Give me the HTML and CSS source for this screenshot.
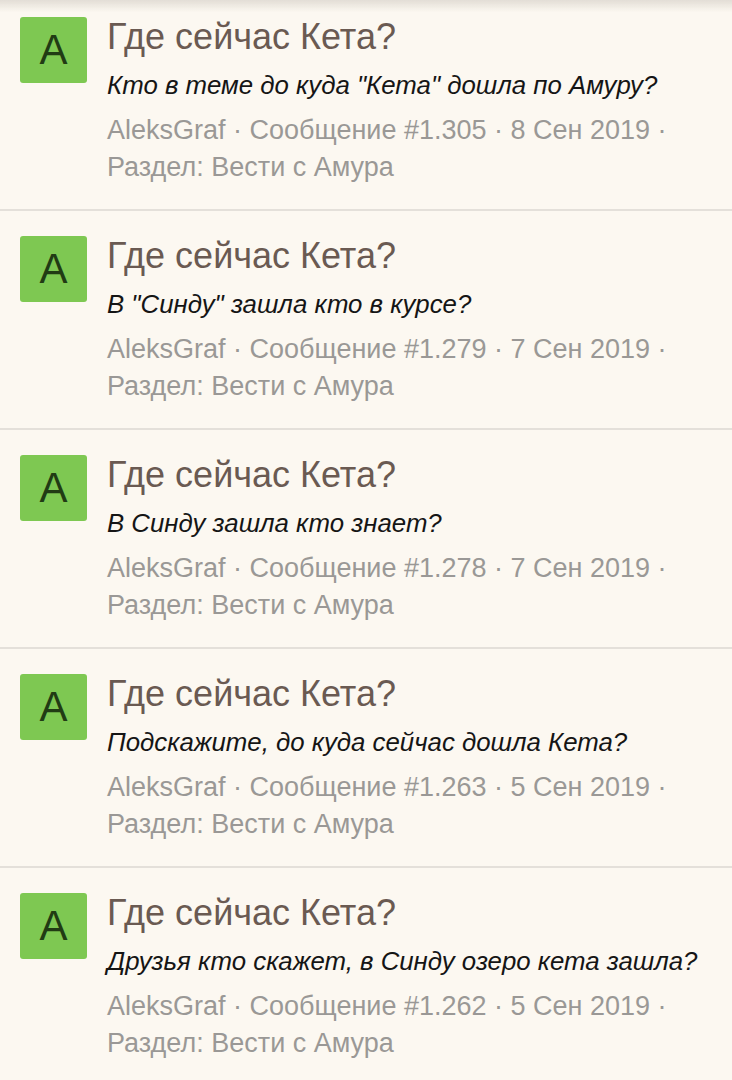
FILE: index.html
```html
<!DOCTYPE html>
<html lang="ru">
<head>
    <meta charset="UTF-8">
    <meta name="viewport" content="width=device-width, initial-scale=1.0">
    <title>Результаты поиска</title>
    <link rel="stylesheet" href="styles.css">
</head>
<body>
    <div class="top-shadow"></div>
    <ol class="results">
        <li class="result">
            <div class="avatar">A</div>
            <div class="result-body">
                <h3 class="result-title">Где сейчас Кета?</h3>
                <p class="result-snippet">Кто в теме до куда "Кета" дошла по Амуру?</p>
                <p class="result-meta">AleksGraf · Сообщение #1.305 · 8 Сен 2019 · Раздел: Вести с Амура</p>
            </div>
        </li>
        <li class="result">
            <div class="avatar">A</div>
            <div class="result-body">
                <h3 class="result-title">Где сейчас Кета?</h3>
                <p class="result-snippet">В "Синду" зашла кто в курсе?</p>
                <p class="result-meta">AleksGraf · Сообщение #1.279 · 7 Сен 2019 · Раздел: Вести с Амура</p>
            </div>
        </li>
        <li class="result">
            <div class="avatar">A</div>
            <div class="result-body">
                <h3 class="result-title">Где сейчас Кета?</h3>
                <p class="result-snippet">В Синду зашла кто знает?</p>
                <p class="result-meta">AleksGraf · Сообщение #1.278 · 7 Сен 2019 · Раздел: Вести с Амура</p>
            </div>
        </li>
        <li class="result">
            <div class="avatar">A</div>
            <div class="result-body">
                <h3 class="result-title">Где сейчас Кета?</h3>
                <p class="result-snippet">Подскажите, до куда сейчас дошла Кета?</p>
                <p class="result-meta">AleksGraf · Сообщение #1.263 · 5 Сен 2019 · Раздел: Вести с Амура</p>
            </div>
        </li>
        <li class="result">
            <div class="avatar">A</div>
            <div class="result-body">
                <h3 class="result-title">Где сейчас Кета?</h3>
                <p class="result-snippet">Друзья кто скажет, в Синду озеро кета зашла?</p>
                <p class="result-meta">AleksGraf · Сообщение #1.262 · 5 Сен 2019 · Раздел: Вести с Амура</p>
            </div>
        </li>
    </ol>
</body>
</html>
```

FILE: styles.css
```css
body { margin: 0; background: #fcf8f1; font-family: "Liberation Sans", Arial, sans-serif; }
.top-shadow { position: fixed; top: 0; left: 0; right: 0; height: 12px; background: linear-gradient(#e2ddd5, rgba(252,248,241,0)); }
.results { list-style: none; margin: -8px 0 0; padding: 0; }
.result { display: flex; gap: 20px; padding: 25px 20px 0 20px; height: 192px; border-bottom: 2px solid #e4e0da; }
.avatar { flex: 0 0 67px; height: 66px; background: #7ec852; border-radius: 3px; color: #213b14; font-size: 42px; line-height: 66px; text-align: center; }
.result-body { flex: 1; min-width: 0; }
.result-title { margin: 0; font-size: 36px; font-weight: normal; line-height: 40px; color: #6a5a52; }
.result-snippet { margin: 12px 0 0; font-size: 25.8px; line-height: 32px; font-style: italic; color: #151515; }
.result-meta { margin: 11px 0 0; font-size: 27px; line-height: 37px; color: #9a9896; }
```
